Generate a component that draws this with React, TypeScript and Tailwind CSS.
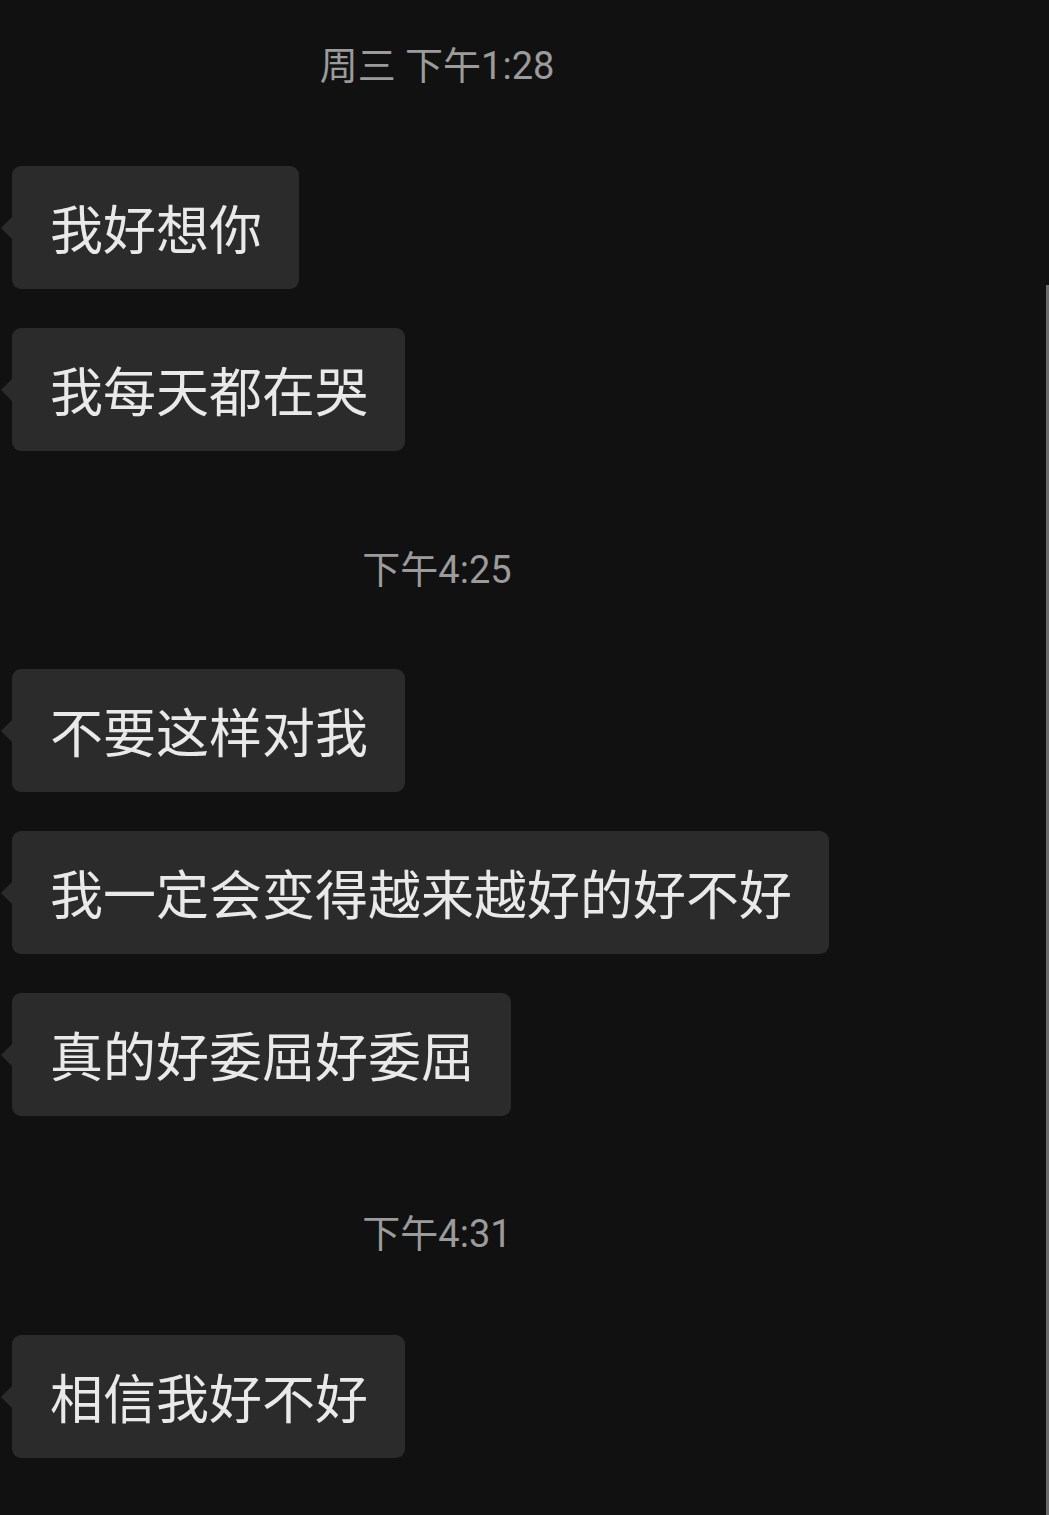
const font = "font-['Noto_Sans_CJK_SC','Noto_Sans',sans-serif]";

type Item = { kind: 'time'; text: string; mt: string } | { kind: 'msg'; text: string; mt: string };

const items: Item[] = [
  { kind: 'time', text: '周三 下午1:28', mt: 'mt-[48px]' },
  { kind: 'msg', text: '我好想你', mt: 'mt-[82px]' },
  { kind: 'msg', text: '我每天都在哭', mt: 'mt-[39px]' },
  { kind: 'time', text: '下午4:25', mt: 'mt-[101px]' },
  { kind: 'msg', text: '不要这样对我', mt: 'mt-[81px]' },
  { kind: 'msg', text: '我一定会变得越来越好的好不好', mt: 'mt-[39px]' },
  { kind: 'msg', text: '真的好委屈好委屈', mt: 'mt-[39px]' },
  { kind: 'time', text: '下午4:31', mt: 'mt-[100px]' },
  { kind: 'msg', text: '相信我好不好', mt: 'mt-[83px]' },
];

function TimeLabel({ text, mt }: { text: string; mt: string }) {
  return (
    <div className={`${mt} w-[874px] h-[36px] flex items-center justify-center text-[38px] leading-none text-[#9b9b9b] font-['Roboto','Noto_Sans_CJK_SC',sans-serif]`}>
      {text}
    </div>
  );
}

function Bubble({ text, mt }: { text: string; mt: string }) {
  return (
    <div className={`${mt} relative flex`}>
      <div className="relative ml-[12px] h-[123px] pl-[38px] pr-[37px] flex items-center bg-[#2b2b2b] rounded-[9px]">
        <span className="absolute left-[-11px] top-1/2 -translate-y-1/2 w-0 h-0 border-y-[12px] border-y-transparent border-r-[12px] border-r-[#2b2b2b]"></span>
        <span className={`text-[53px] leading-none text-[#e9e9e9] ${font}`}>{text}</span>
      </div>
    </div>
  );
}

export default function App() {
  return (
    <div className={`relative w-[1049px] h-[1515px] overflow-hidden bg-[#111111] ${font}`}>
      {items.map((it, i) =>
        it.kind === 'time'
          ? <TimeLabel key={i} text={it.text} mt={it.mt} />
          : <Bubble key={i} text={it.text} mt={it.mt} />
      )}
      <div className="absolute right-0 top-[285px] bottom-0 w-[3px] bg-[#6b6b6b]"></div>
    </div>
  );
}
